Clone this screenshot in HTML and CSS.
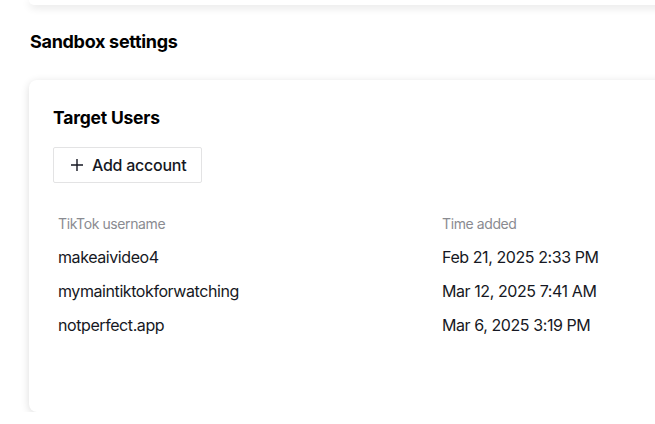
FILE: index.html
```html
<!DOCTYPE html>
<html>
<head>
<meta charset="utf-8">
<link rel="stylesheet" href="styles.css">
</head>
<body>
<div class="page">
  <div class="top-card"></div>
  <h2 class="section-title">Sandbox settings</h2>
  <div class="card">
    <h3 class="card-title">Target Users</h3>
    <button class="btn">
      <svg class="plus" width="14" height="14" viewBox="0 0 14 14"><path d="M7 1v12M1 7h12" stroke="#161823" stroke-width="1.4" fill="none"/></svg>
      <span>Add account</span>
    </button>
    <div class="table">
      <div class="th">TikTok username</div>
      <div class="th">Time added</div>
      <div class="td">makeaivideo4</div>
      <div class="td">Feb 21, 2025 2:33 PM</div>
      <div class="td">mymaintiktokforwatching</div>
      <div class="td">Mar 12, 2025 7:41 AM</div>
      <div class="td">notperfect.app</div>
      <div class="td">Mar 6, 2025 3:19 PM</div>
    </div>
  </div>
</div>
</body>
</html>
```
FILE: styles.css
```css
html, body {
  margin: 0;
  padding: 0;
  background: #ffffff;
  overflow: hidden;
}
body {
  font-family: Inter, "Liberation Sans", sans-serif;
  color: #161823;
}
.page {
  width: 720px;
  padding-left: 29px;
}
.top-card {
  height: 5px;
  background: #fff;
  border-radius: 0 0 8px 8px;
  box-shadow: 0 2px 8px rgba(0,0,0,0.14);
}
.section-title {
  margin: 0;
  padding: 25px 0 0 1px;
  font-size: 18px;
  line-height: 24px;
  font-weight: 700;
  letter-spacing: -0.3px;
  color: #000;
}
.card {
  margin-top: 26px;
  height: 332px;
  box-sizing: border-box;
  background: #fff;
  border-radius: 8px;
  box-shadow: 0 2px 8px rgba(0,0,0,0.14);
  padding: 26px 24px 0 24px;
}
.card-title {
  margin: 0;
  font-size: 17.5px;
  line-height: 24px;
  font-weight: 700;
  letter-spacing: -0.2px;
  color: #000;
}
.btn {
  margin-top: 17px;
  display: flex;
  align-items: center;
  gap: 8px;
  height: 36px;
  padding: 0 15px 0 16px;
  background: #fff;
  border: 1px solid #e3e3e4;
  border-radius: 2px;
  font-family: inherit;
  font-size: 16px;
  font-weight: 500;
  letter-spacing: -0.25px;
  color: #161823;
}
.plus { display: block; }
.table {
  margin-top: 23px;
  display: grid;
  grid-template-columns: 384px 1fr;
}
.th {
  padding: 0 5px;
  height: 34px;
  display: flex;
  align-items: center;
  font-size: 14px;
  letter-spacing: -0.4px;
  color: #8a8b91;
}
.td {
  padding: 0 5px;
  height: 34px;
  display: flex;
  align-items: center;
  font-size: 16px;
  letter-spacing: -0.42px;
  color: #161823;
}
```
